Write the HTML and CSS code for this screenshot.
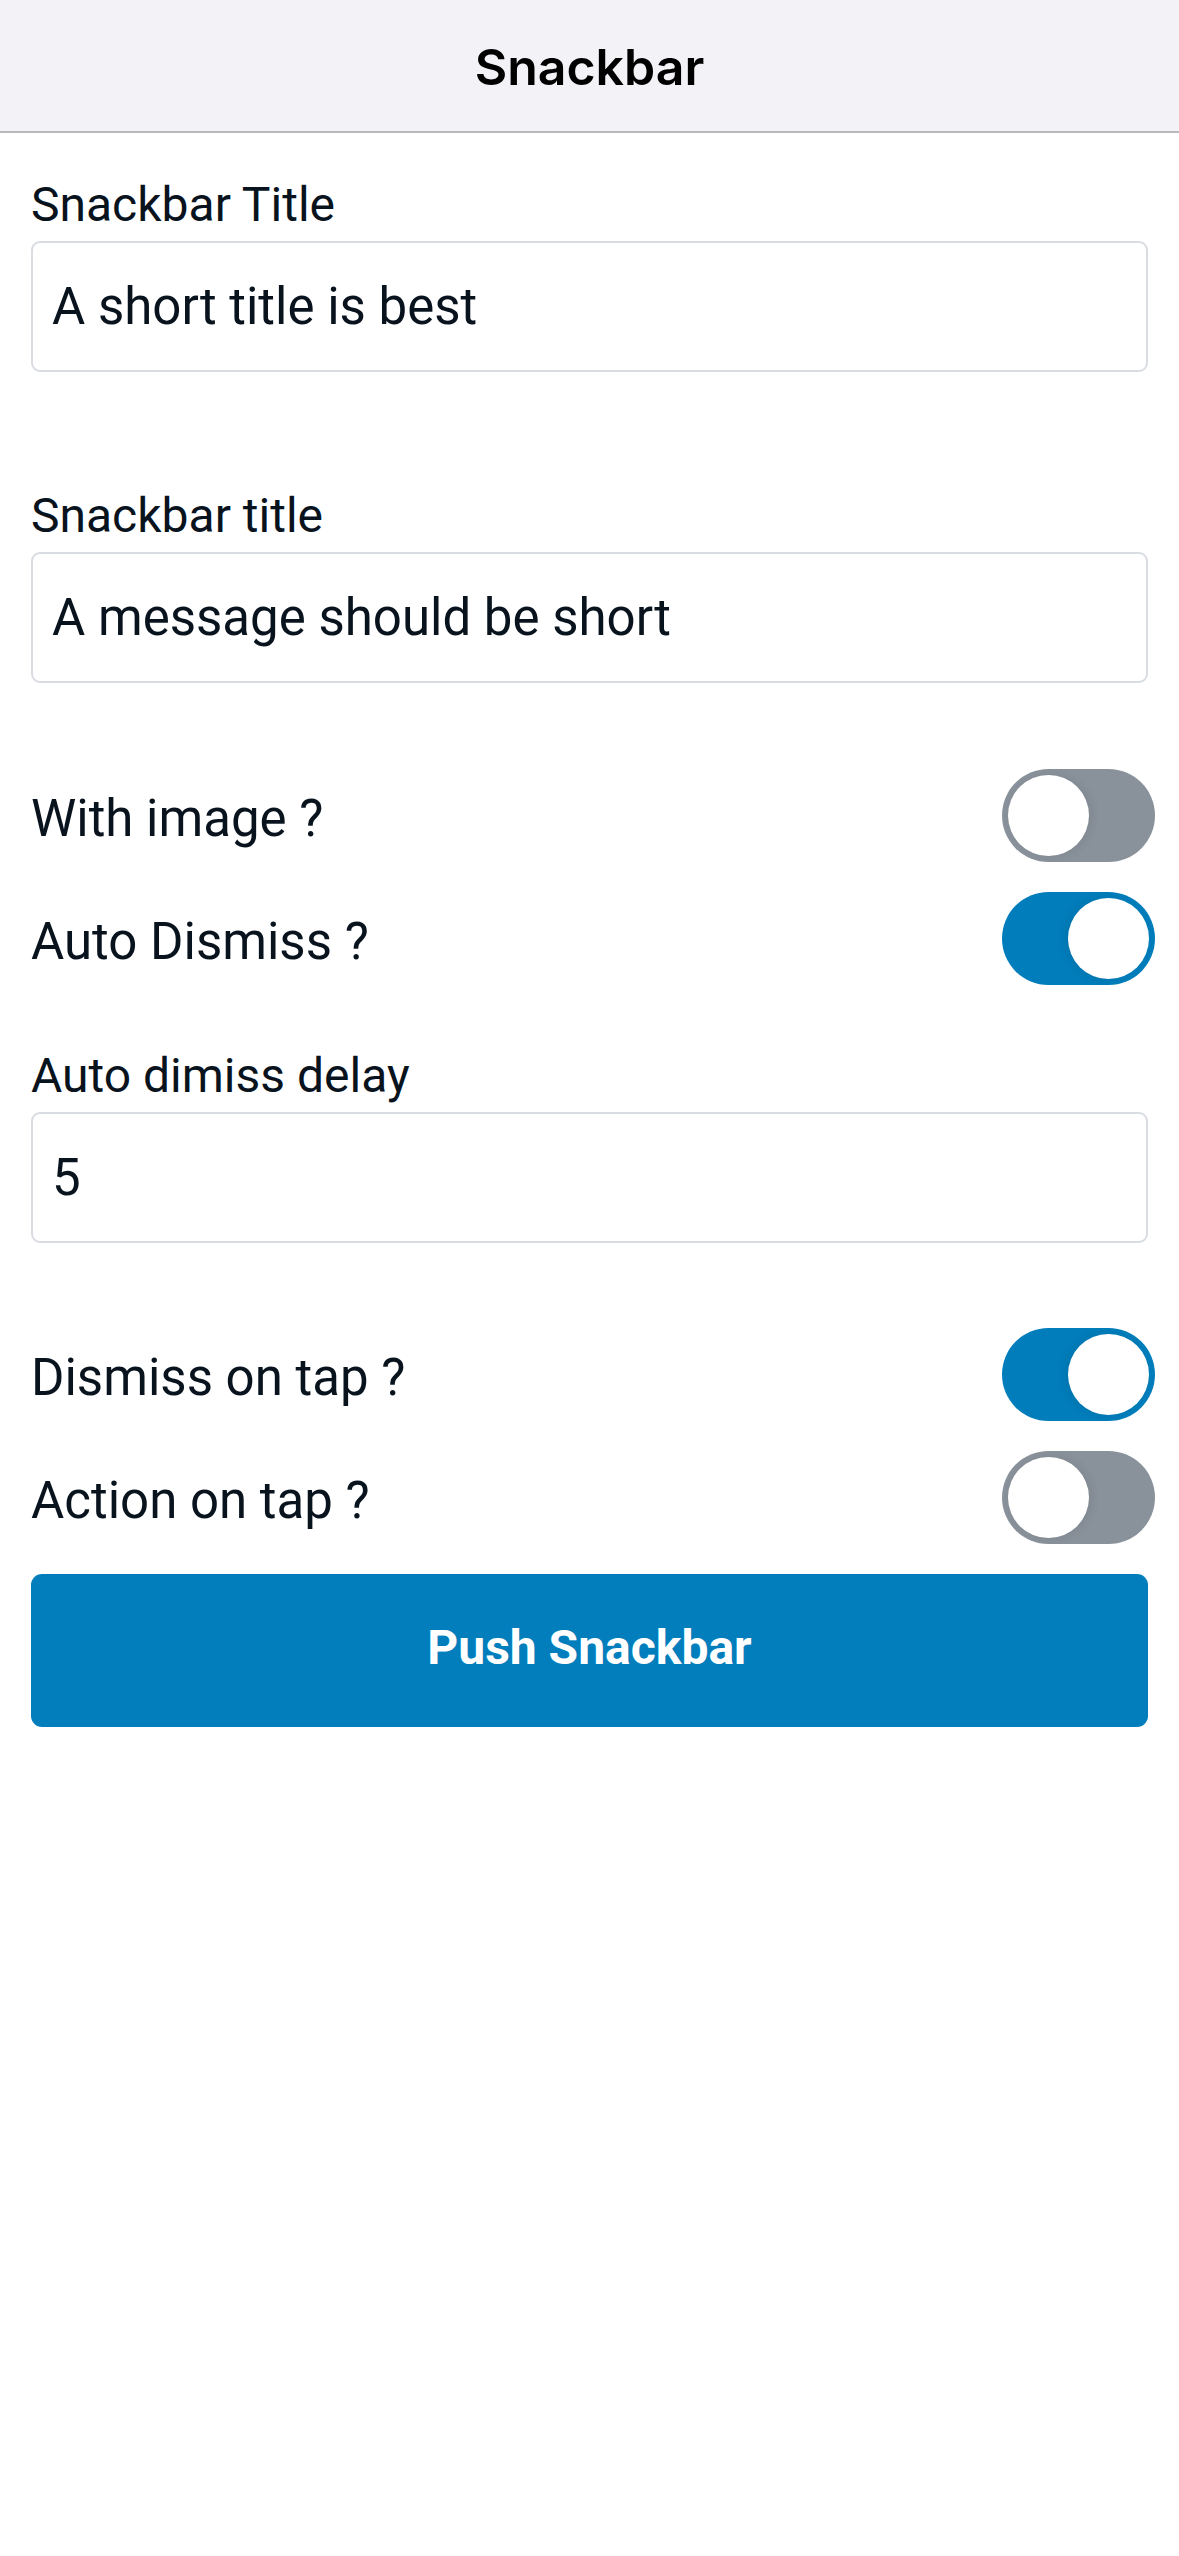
FILE: index.html
```html
<!DOCTYPE html>
<html lang="en">
<head>
<meta charset="utf-8">
<title>Snackbar</title>
<link rel="stylesheet" href="styles.css">
</head>
<body>
<header class="toolbar"><h1 class="toolbar-title">Snackbar</h1></header>
<main class="content">
  <div class="field field-first">
    <label class="field-label">Snackbar Title</label>
    <div class="input">A short title is best</div>
  </div>
  <div class="field field-second">
    <label class="field-label">Snackbar title</label>
    <div class="input">A message should be short</div>
  </div>
  <div class="rows rows-first">
    <div class="row"><span class="row-label">With image ?</span><span class="toggle"></span></div>
    <div class="row"><span class="row-label">Auto Dismiss ?</span><span class="toggle on"></span></div>
  </div>
  <div class="field field-third">
    <label class="field-label">Auto dimiss delay</label>
    <div class="input">5</div>
  </div>
  <div class="rows rows-second">
    <div class="row"><span class="row-label">Dismiss on tap ?</span><span class="toggle on"></span></div>
    <div class="row"><span class="row-label">Action on tap ?</span><span class="toggle"></span></div>
  </div>
  <button class="push-btn">Push Snackbar</button>
</main>
</body>
</html>
```

FILE: styles.css
```css
html, body {
  margin: 0;
  padding: 0;
  background: #ffffff;
}
body {
  font-family: Roboto, "Liberation Sans", sans-serif;
  color: #08131d;
  width: 1179px;
  min-height: 2556px;
}
.toolbar {
  height: 131px;
  background: #f2f2f7;
  border-bottom: 2px solid #b9b9bd;
  display: flex;
  align-items: center;
  justify-content: center;
}
.toolbar-title {
  margin: 0;
  font-family: Inter, Roboto, sans-serif;
  font-weight: 600;
  font-size: 50px;
  color: #000;
  padding-top: 2px;
}
.content {
  padding: 0 31px;
  display: flex;
  flex-direction: column;
}
.field {
  display: flex;
  flex-direction: column;
}
.field-first { margin-top: 43px; }
.field-second { margin-top: 115px; }
.field-third { margin-top: 47px; }
.field-label {
  font-size: 48px;
  line-height: 57px;
  height: 57px;
}
.input {
  margin-top: 8px;
  box-sizing: border-box;
  height: 131px;
  border: 2.5px solid #d9dce1;
  border-radius: 9px;
  padding: 0 0 0 19px;
  display: flex;
  align-items: center;
  font-size: 51px;
  color: #08131d;
}
.rows {
  display: flex;
  flex-direction: column;
  margin-right: -7px;
}
.rows-first { margin-top: 71px; }
.rows-second { margin-top: 70px; }
.row {
  height: 123px;
  display: flex;
  align-items: center;
  justify-content: space-between;
}
.row-label {
  font-size: 51px;
  padding-top: 6px;
}
.toggle {
  position: relative;
  width: 153px;
  height: 93px;
  border-radius: 47px;
  background: #89929b;
  flex: none;
}
.toggle::after {
  content: "";
  position: absolute;
  top: 6px;
  left: 6px;
  width: 81px;
  height: 81px;
  border-radius: 50%;
  background: #ffffff;
  box-shadow: 3px 0 10px rgba(0, 0, 0, 0.08);
}
.toggle.on {
  background: #017dbb;
}
.toggle.on::after {
  left: 66px;
  box-shadow: -3px 0 10px rgba(0, 0, 0, 0.08);
}
.push-btn {
  margin-top: 15px;
  height: 153px;
  border: none;
  border-radius: 11px;
  background: #027ebd;
  color: #ffffff;
  font-family: Roboto, "Liberation Sans", sans-serif;
  font-weight: 700;
  font-size: 48px;
  padding: 0 0 7px 0;
}
```
